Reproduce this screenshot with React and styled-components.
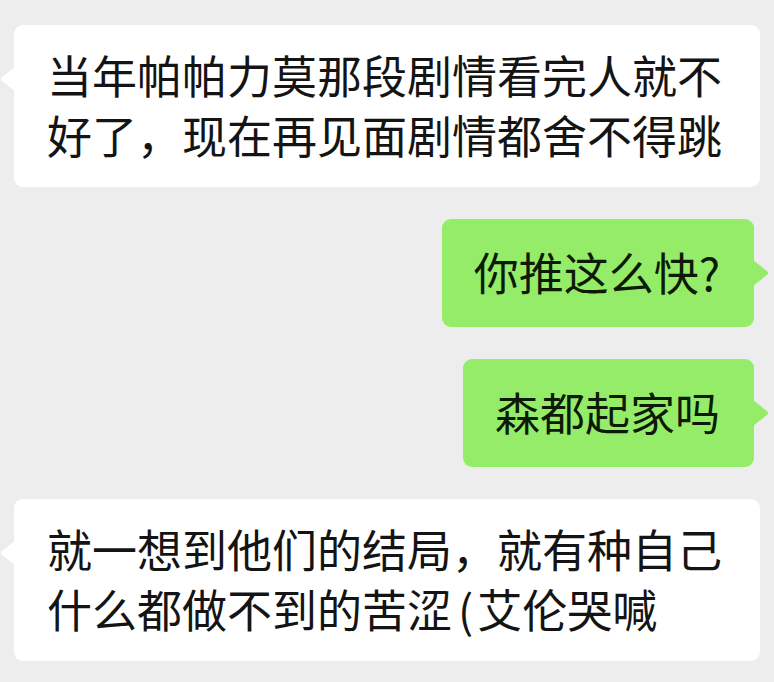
import styled, { createGlobalStyle, css } from 'styled-components'

const GlobalStyle = createGlobalStyle`
  html, body {
    margin: 0;
    padding: 0;
    background: #ededed;
  }
  * {
    box-sizing: border-box;
  }
`

const ChatWrapper = styled.div`
  width: 774px;
  height: 682px;
  overflow: hidden;
  background: #ededed;
  display: flex;
  flex-direction: column;
  gap: 32px;
  padding: 25px 14px 20px 14px;
  font-family: "Noto Sans CJK SC", "Noto Sans", sans-serif;
`

const Row = styled.div`
  display: flex;
  justify-content: ${props => props.isMine ? 'flex-end' : 'flex-start'};
  padding-right: ${props => props.isMine ? 6 : 0}px;
`

const Bubble = styled.div`
  position: relative;
  max-width: 746px;
  padding: ${props => props.isMine ? '23px 34px 25px 32px' : '20px 33px 22px 33px'};
  border-radius: 9px;
  font-size: 45px;
  line-height: 60px;
  color: ${props => props.isMine ? '#0d1a06' : '#141414'};
  background: ${props => props.isMine ? '#95ec69' : '#ffffff'};

  &::before {
    content: '';
    position: absolute;
    top: 41px;
    width: 15px;
    height: 26px;
    background: inherit;
    ${props => props.isMine
      ? css`
        right: -14px;
        clip-path: polygon(0 0, 100% 46%, 100% 54%, 0 100%);
      `
      : css`
        left: -13px;
        clip-path: polygon(100% 0, 0 46%, 0 54%, 100% 100%);
      `}
  }
`

// half-width brackets get a bit of air around them
const Paren = styled.span`
  padding: 0 4px 0 6px;
`

const messages = [
  { id: 1, isMine: false, text: ['当年帕帕力莫那段剧情看完人就不好了，现在再见面剧情都舍不得跳'] },
  { id: 2, isMine: true, text: ['你推这么快?'] },
  { id: 3, isMine: true, text: ['森都起家吗'] },
  { id: 4, isMine: false, text: ['就一想到他们的结局，就有种自己什么都做不到的苦涩', <Paren key="p">(</Paren>, '艾伦哭喊'] },
]

const App = () => {
  return (
    <>
      <GlobalStyle />
      <ChatWrapper>
        {messages.map((msg) => (
          <Row key={msg.id} isMine={msg.isMine}>
            <Bubble isMine={msg.isMine}>{msg.text}</Bubble>
          </Row>
        ))}
      </ChatWrapper>
    </>
  )
}

export default App
